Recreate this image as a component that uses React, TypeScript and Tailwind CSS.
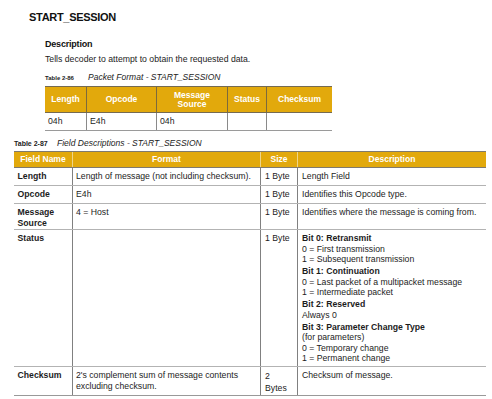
import React from 'react';

interface Row {
  name: React.ReactNode;
  format: React.ReactNode;
  size: React.ReactNode;
  desc: React.ReactNode;
  height: string;
}

const Heading = ({ children, first }: { children: React.ReactNode; first?: boolean }) => (
  <div className={`font-bold ${first ? '' : 'mt-[1.5px]'}`}>{children}</div>
);

const rows: Row[] = [
  {
    name: 'Length',
    format: 'Length of message (not including checksum).',
    size: '1 Byte',
    desc: 'Length Field',
    height: 'h-[18px]',
  },
  {
    name: 'Opcode',
    format: 'E4h',
    size: '1 Byte',
    desc: 'Identifies this Opcode type.',
    height: 'h-[18px]',
  },
  {
    name: 'Message Source',
    format: '4 = Host',
    size: '1 Byte',
    desc: 'Identifies where the message is coming from.',
    height: 'h-[26px]',
  },
  {
    name: 'Status',
    format: '',
    size: '1 Byte',
    desc: (
      <>
        <Heading first>Bit 0: Retransmit</Heading>
        <div>0 = First transmission</div>
        <div>1 = Subsequent transmission</div>
        <Heading>Bit 1: Continuation</Heading>
        <div>0 = Last packet of a multipacket message</div>
        <div>1 = Intermediate packet</div>
        <Heading>Bit 2: Reserved</Heading>
        <div>Always 0</div>
        <Heading>Bit 3: Parameter Change Type</Heading>
        <div>(for parameters)</div>
        <div>0 = Temporary change</div>
        <div>1 = Permanent change</div>
      </>
    ),
    height: 'h-[137px]',
  },
  {
    name: 'Checksum',
    format: "2's complement sum of message contents excluding checksum.",
    size: (
      <span className="block leading-[12px]">
        2<br />
        Bytes
      </span>
    ),
    desc: 'Checksum of message.',
    height: 'h-[29px]',
  },
];

const packetCols = [
  { label: 'Length', w: 'w-[42px]' },
  { label: 'Opcode', w: 'w-[70px]' },
  { label: 'Message Source', w: 'w-[71px]' },
  { label: 'Status', w: 'w-[39px]' },
  { label: 'Checksum', w: 'w-[65px]' },
];
const packetValues = ['04h', 'E4h', '04h', '', ''];

export default function App() {
  return (
    <div className="w-[492px] h-[399px] overflow-hidden bg-white text-[#1c1c1c] font-['Liberation_Sans',Arial,sans-serif]">
      <h1 className="pt-[10px] pl-[29px] text-[11px] leading-[14px] font-bold tracking-[-0.3px] text-[#111]">
        START_SESSION
      </h1>

      <div className="pl-[45px]">
        <h2 className="mt-[14px] text-[9px] leading-[12px] font-bold tracking-[-0.2px] text-[#111]">
          Description
        </h2>
        <p className="mt-[4px] text-[8.7px] leading-[11px]">
          Tells decoder to attempt to obtain the requested data.
        </p>
        <div className="mt-[7px] flex items-baseline text-[8.5px] leading-[11px]">
          <span className="w-[43px] text-[6px] font-bold">Table 2-86</span>
          <span className="italic">Packet Format - START_SESSION</span>
        </div>

        {/* packet format table */}
        <div className="mt-[2px] w-[287px]">
          <div className="flex h-[27px] bg-[#e2a90c] border-t-[1.5px] border-b border-[#746a52]">
            {packetCols.map((c, i) => (
              <div
                key={c.label}
                className={`${c.w} flex items-center justify-center text-center text-[8.5px] leading-[9px] font-bold text-white px-[6px] ${
                  i < packetCols.length - 1 ? 'border-r border-[#7c6a3c]' : ''
                }`}
              >
                {c.label}
              </div>
            ))}
          </div>
          <div className="flex h-[18px] border-b-[1.5px] border-[#9a9a9a]">
            {packetCols.map((c, i) => (
              <div
                key={c.label}
                className={`${c.w} pl-[3px] pt-[3px] text-[8.7px] leading-[10.5px] ${
                  i < packetCols.length - 1 ? 'border-r border-[#8a8a8a]' : ''
                }`}
              >
                {packetValues[i]}
              </div>
            ))}
          </div>
        </div>
      </div>

      <div className="pl-[14px]">
        <div className="mt-[7px] flex items-baseline text-[8.5px] leading-[11px]">
          <span className="w-[43px] text-[7px] font-bold">Table 2-87</span>
          <span className="italic">Field Descriptions - START_SESSION</span>
        </div>

        {/* field descriptions table */}
        <div className="mt-[2px] w-[472px] text-[8.7px] leading-[10.5px]">
          <div className="grid grid-cols-[59px_188px_37px_188px] h-[17px] bg-[#e2a90c] border-t-[1.5px] border-b border-[#7f7a6e] text-white font-bold text-[8.5px]">
            {['Field Name', 'Format', 'Size', 'Description'].map((h, i) => (
              <div
                key={h}
                className={`flex items-center justify-center ${i < 3 ? 'border-r border-[#eed58a]' : ''}`}
              >
                {h}
              </div>
            ))}
          </div>
          {rows.map((r, idx) => (
            <div
              key={idx}
              className={`grid grid-cols-[59px_188px_37px_188px] ${r.height} ${
                idx === rows.length - 1 ? 'border-b-[1.5px] border-[#999]' : 'border-b border-[#b3b3b3]'
              }`}
            >
              <div className="pl-[3.5px] pt-[3px] font-bold border-r border-[#808080]">{r.name}</div>
              <div className="pl-[3px] pt-[3px] pr-[3px] border-r border-[#808080]">{r.format}</div>
              <div className="pl-[4px] pt-[3px] border-r border-[#808080]">{r.size}</div>
              <div className="pl-[4px] pt-[3px]">{r.desc}</div>
            </div>
          ))}
        </div>
      </div>
    </div>
  );
}
